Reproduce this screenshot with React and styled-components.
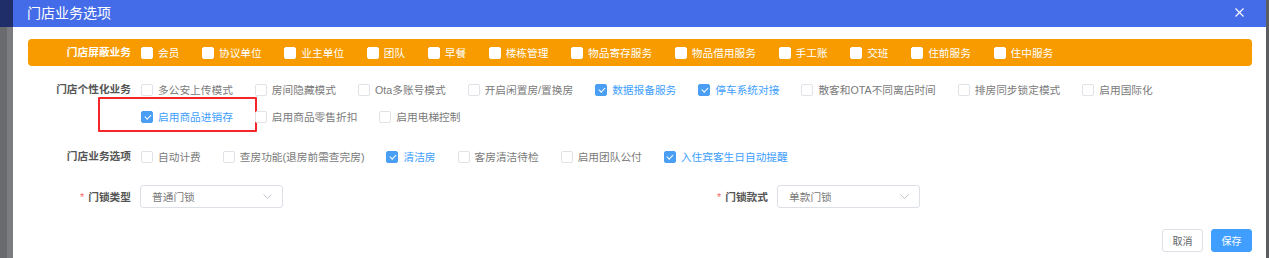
import React from 'react';
import styled, { createGlobalStyle } from 'styled-components';

const blockedOptions = ['会员', '协议单位', '业主单位', '团队', '早餐', '楼栋管理', '物品寄存服务', '物品借用服务', '手工账', '交班', '住前服务', '住中服务'];

const personalOptions = [
  { label: '多公安上传模式' },
  { label: '房间隐藏模式' },
  { label: 'Ota多账号模式' },
  { label: '开启闲置房/置换房' },
  { label: '数据报备服务', checked: true },
  { label: '停车系统对接', checked: true },
  { label: '散客和OTA不同离店时间' },
  { label: '排房同步锁定模式' },
  { label: '启用国际化' },
  { label: '启用商品进销存', checked: true, highlight: true },
  { label: '启用商品零售折扣' },
  { label: '启用电梯控制' },
];

const businessOptions = [
  { label: '自动计费' },
  { label: '查房功能(退房前需查完房)' },
  { label: '清洁房', checked: true },
  { label: '客房清洁待检' },
  { label: '启用团队公付' },
  { label: '入住宾客生日自动提醒', checked: true },
];

function Option({ label, checked, highlight, inverse }) {
  return (
    <OptionItem $checked={checked} $inverse={inverse}>
      <Box $checked={checked} $inverse={inverse} />
      <span>{label}</span>
      {highlight && <Highlight />}
    </OptionItem>
  );
}

export default function App() {
  return (
    <Page>
      <GlobalStyle />
      <LeftBackdrop>
        <BackdropTop />
      </LeftBackdrop>
      <Dialog>
        <Header>
          <Title>门店业务选项</Title>
          <Close>
            <svg width="9" height="9" viewBox="0 0 9 9">
              <path d="M0.5 0.5 L8.5 8.5 M8.5 0.5 L0.5 8.5" stroke="#fff" strokeWidth="1.1" />
            </svg>
          </Close>
        </Header>
        <Body>
          <BlockedBar>
            <RowLabel $inverse>门店屏蔽业务</RowLabel>
            <Options>
              {blockedOptions.map((o) => (
                <Option key={o} label={o} inverse />
              ))}
            </Options>
          </BlockedBar>
          <Row $gap={13}>
            <RowLabel>门店个性化业务</RowLabel>
            <Options>
              {personalOptions.map((o) => (
                <Option key={o.label} {...o} />
              ))}
            </Options>
          </Row>
          <Row $gap={15}>
            <RowLabel>门店业务选项</RowLabel>
            <Options>
              {businessOptions.map((o) => (
                <Option key={o.label} {...o} />
              ))}
            </Options>
          </Row>
          <FormGrid>
            <Field>
              <FieldLabel>门锁类型</FieldLabel>
              <Select>
                <span>普通门锁</span>
                <Chevron />
              </Select>
            </Field>
            <Field>
              <FieldLabel>门锁款式</FieldLabel>
              <Select>
                <span>单款门锁</span>
                <Chevron />
              </Select>
            </Field>
          </FormGrid>
          <Footer>
            <Button>取消</Button>
            <Button $primary>保存</Button>
          </Footer>
        </Body>
      </Dialog>
      <RightBackdrop />
    </Page>
  );
}

function Chevron() {
  return (
    <svg width="9" height="5" viewBox="0 0 9 5">
      <path d="M0.5 0.5 L4.5 4.5 L8.5 0.5" fill="none" stroke="#c0c4cc" strokeWidth="1" />
    </svg>
  );
}

const GlobalStyle = createGlobalStyle`
  html, body {
    margin: 0;
    padding: 0;
    background: #fff;
  }
  body {
    font-family: "Liberation Sans", "Noto Sans CJK SC", sans-serif;
    font-size: 11px;
    overflow: hidden;
  }
`;

const Page = styled.div`
  display: flex;
  width: 1269px;
  height: 258px;
  overflow: hidden;
`;

const LeftBackdrop = styled.div`
  width: 13px;
  flex-shrink: 0;
  background: linear-gradient(to right, #6a6b6e 0, #6a6b6e 7px, #7b7c80 7px);
  display: flex;
  flex-direction: column;
`;

const BackdropTop = styled.div`
  height: 27px;
  background: #1f2d68;
`;

const RightBackdrop = styled.div`
  width: 3px;
  flex-shrink: 0;
  background: #5c5d61;
`;

const Dialog = styled.div`
  flex: 1;
  display: flex;
  flex-direction: column;
  background: #fff;
`;

const Header = styled.div`
  height: 27px;
  background: #456ce8;
  display: flex;
  align-items: center;
  justify-content: space-between;
  padding: 0 22px 0 14px;
`;

const Title = styled.div`
  color: #fff;
  font-size: 14px;
  font-family: "Noto Sans CJK SC", sans-serif;
  line-height: 27px;
  margin-top: -2px;
`;

const Close = styled.div`
  display: flex;
  margin-top: -3px;
`;

const Body = styled.div`
  padding: 12px 14px 0 15px;
  display: flex;
  flex-direction: column;
`;

const Row = styled.div`
  display: grid;
  grid-template-columns: 103px 1fr;
  column-gap: 10px;
  align-items: start;
  margin-bottom: ${(p) => p.$gap}px;
`;

const BlockedBar = styled(Row)`
  background: #f79b00;
  border-radius: 4px;
  height: 27px;
  margin-bottom: 10px;
  align-items: center;
`;

const RowLabel = styled.div`
  text-align: right;
  font-weight: bold;
  font-size: 10.7px;
  line-height: 27px;
  color: ${(p) => (p.$inverse ? '#fff' : '#555')};
  white-space: nowrap;
`;

const Options = styled.div`
  display: flex;
  flex-wrap: wrap;
`;

const OptionItem = styled.label`
  position: relative;
  display: inline-flex;
  align-items: center;
  gap: 5px;
  margin-right: ${(p) => (p.$inverse ? 22.6 : 22)}px;
  height: 27px;
  white-space: nowrap;
  font-size: 10.7px;
  color: ${(p) => (p.$inverse ? '#fff' : p.$checked ? '#409eff' : '#7a7a7a')};
`;

const Box = styled.span`
  position: relative;
  width: 12px;
  height: 12px;
  box-sizing: border-box;
  border-radius: 2px;
  flex-shrink: 0;
  border: 1px solid ${(p) => (p.$inverse ? '#fff' : p.$checked ? '#4a9ff5' : '#e0e2e8')};
  background: ${(p) => (p.$inverse || !p.$checked ? '#fff' : '#4a9ff5')};

  &::after {
    content: '';
    display: ${(p) => (p.$checked ? 'block' : 'none')};
    position: absolute;
    left: 3.5px;
    top: 1.5px;
    width: 2.5px;
    height: 5px;
    border: 1px solid #fff;
    border-left: 0;
    border-top: 0;
    transform: rotate(45deg);
  }
`;

const Highlight = styled.span`
  position: absolute;
  left: -43px;
  top: -6px;
  width: 159px;
  height: 35px;
  box-sizing: border-box;
  border: 2px solid #f5262a;
  border-radius: 1px;
  pointer-events: none;
`;

const FormGrid = styled.div`
  display: grid;
  grid-template-columns: 637px 1fr;
  height: 23px;
  margin-bottom: 21px;
`;

const Field = styled.div`
  display: grid;
  grid-template-columns: 103px 143px;
  column-gap: 9px;
  align-items: center;
`;

const FieldLabel = styled.div`
  text-align: right;
  font-weight: bold;
  color: #555;
  font-size: 10.7px;

  &::before {
    content: '*';
    color: #f56c6c;
    font-weight: normal;
    margin-right: 4px;
  }
`;

const Select = styled.div`
  height: 23px;
  box-sizing: border-box;
  border: 1px solid #dcdfe6;
  border-radius: 3px;
  display: flex;
  align-items: center;
  justify-content: space-between;
  padding: 0 10px 0 11px;
  color: #7a7a7a;
  font-size: 10.7px;
`;

const Footer = styled.div`
  display: flex;
  justify-content: flex-end;
  gap: 8px;
`;

const Button = styled.button`
  width: 41px;
  height: 23px;
  box-sizing: border-box;
  border-radius: 3px;
  font-family: inherit;
  font-size: 10px;
  padding: 0;
  border: 1px solid ${(p) => (p.$primary ? '#409eff' : '#dcdfe6')};
  background: ${(p) => (p.$primary ? '#409eff' : '#fff')};
  color: ${(p) => (p.$primary ? '#fff' : '#606266')};
`;
